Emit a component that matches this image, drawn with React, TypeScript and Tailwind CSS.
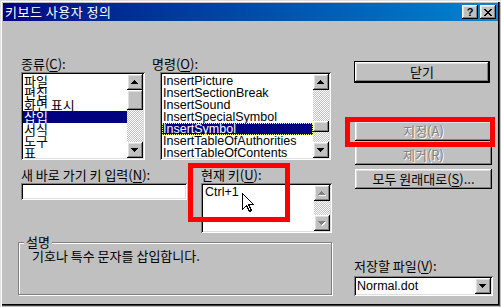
import React from 'react';

const raised = 'shadow-[inset_-1px_-1px_#000,inset_1px_1px_#fff,inset_-2px_-2px_#808080,inset_2px_2px_#dfdfdf]';
const sunken = 'shadow-[inset_1px_1px_#808080,inset_-1px_-1px_#fff,inset_2px_2px_#000,inset_-2px_-2px_#dfdfdf]';
const dither = 'bg-[repeating-conic-gradient(#fff_0_25%,#c0c0c0_0_50%)] bg-[length:2px_2px]';
const kr = "font-['Noto_Sans_CJK_KR',sans-serif]";
const en = "font-['Liberation_Sans','Noto_Sans_CJK_KR',sans-serif]";

function Tri({ down, disabled }: { down?: boolean; disabled?: boolean }) {
  const rows = down ? [0, 1, 2, 3] : [3, 2, 1, 0];
  const fill = disabled ? '#808080' : '#000';
  return (
    <svg width="8" height="5" viewBox="0 0 8 5" shapeRendering="crispEdges">
      {rows.map((r, i) => (
        <g key={i}>
          {disabled && <rect x={r + 1} y={i + 1} width={7 - r * 2} height="1" fill="#fff" />}
          <rect x={r} y={i} width={7 - r * 2} height="1" fill={fill} />
        </g>
      ))}
    </svg>
  );
}

function ArrowBtn({ down, disabled }: { down?: boolean; disabled?: boolean }) {
  return (
    <div className={`w-[16px] h-[16px] shrink-0 bg-[#c0c0c0] flex items-center justify-center ${raised}`}>
      <Tri down={down} disabled={disabled} />
    </div>
  );
}

function ScrollBar({ before, thumb, disabled }: { before: number; thumb: number; disabled?: boolean }) {
  return (
    <div className="w-[16px] flex flex-col">
      <ArrowBtn disabled={disabled} />
      <div className={`flex-1 flex flex-col ${dither}`}>
        <div style={{ height: before }} />
        {thumb > 0 && <div className={`bg-[#c0c0c0] ${raised}`} style={{ height: thumb }} />}
      </div>
      <ArrowBtn down disabled={disabled} />
    </div>
  );
}

function Label({ text, k, rest = '):' }: { text: string; k: string; rest?: string }) {
  return (
    <div className={`h-[16px] leading-[16px] text-[13px] text-black whitespace-nowrap ${kr}`}>
      {text}(<span className="underline underline-offset-2">{k}</span>{rest}
    </div>
  );
}

function Button({ children, disabled, className = '' }: { children: React.ReactNode; disabled?: boolean; className?: string }) {
  return (
    <div
      className={`h-[20px] bg-[#c0c0c0] flex items-center justify-center text-[13px] ${kr} ${raised} ${
        disabled ? 'text-[#808080] [text-shadow:1px_1px_0_#fff]' : 'text-black'
      } ${className}`}
    >
      {children}
    </div>
  );
}

const categories = ['파일', '편집', '화면 표시', '삽입', '서식', '도구', '표'];
const commands = [
  'InsertPicture',
  'InsertSectionBreak',
  'InsertSound',
  'InsertSpecialSymbol',
  'InsertSymbol',
  'InsertTableOfAuthorities',
  'InsertTableOfContents',
];

export default function App() {
  return (
    <div className={`relative w-[501px] h-[307px] bg-[#c0c0c0] flex flex-col overflow-hidden select-none shadow-[inset_1px_1px_#dfdfdf,inset_2px_2px_#fff,inset_-1px_-1px_#c0c0c0,inset_-2px_-2px_#404040,inset_-3px_-3px_#000]`}>
      {/* 제목 표시줄 */}
      <div className="mx-[3px] mt-[3px] h-[18px] bg-gradient-to-r from-[#000080] to-[#1084d0] flex items-center pl-[2px] pr-[2px]">
        <span className={`text-white text-[13px] leading-[18px] tracking-[0.5px] ${kr}`}>키보드 사용자 정의</span>
        <div className="ml-auto flex gap-[2px]">
          <div className={`w-[16px] h-[14px] bg-[#c0c0c0] flex items-center justify-center text-[11px] font-bold leading-none text-black ${en} ${raised}`}>
            ?
          </div>
          <div className={`w-[16px] h-[14px] bg-[#c0c0c0] flex items-center justify-center ${raised}`}>
            <svg width="8" height="7" viewBox="0 0 8 7" shapeRendering="crispEdges">
              <path d="M0 0h2v1h-2zM6 0h2v1h-2zM1 1h2v1h-2zM5 1h2v1h-2zM2 2h4v1h-4zM3 3h2v1h-2zM2 4h4v1h-4zM1 5h2v1h-2zM5 5h2v1h-2zM0 6h2v1h-2zM6 6h2v1h-2z" fill="#000" />
            </svg>
          </div>
        </div>
      </div>

      <div className="flex">
        {/* 왼쪽 영역 */}
        <div className="ml-[18px] w-[314px] flex flex-col">
          <div className="mt-[35px] ml-[3px] flex">
            <div className="w-[124px] flex flex-col">
              <Label text="종류" k="C" />
              <div className={`h-[88px] bg-white p-[2px] flex ${sunken}`}>
                <div className={`flex-1 pt-[1px] text-[13px] ${kr}`}>
                  {categories.map((c, i) => (
                    <div
                      key={c}
                      className={`h-[12px] leading-[12px] pl-[1px] whitespace-nowrap ${
                        i === 3 ? 'bg-[#000080] text-white' : 'text-black'
                      }`}
                    >
                      {c}
                    </div>
                  ))}
                </div>
                <ScrollBar before={0} thumb={20} />
              </div>
            </div>
            <div className="ml-[7px] w-[180px] flex flex-col">
              <Label text="명령" k="O" />
              <div className={`ml-[8px] w-[171px] h-[88px] bg-white p-[2px] flex ${sunken}`}>
                <div className={`flex-1 pt-[1px] text-[12.5px] ${en}`}>
                  {commands.map((c, i) => (
                    <div
                      key={c}
                      className={`h-[12px] leading-[12px] pl-[1px] whitespace-nowrap ${
                        i === 4
                          ? 'bg-[#000080] text-white outline-1 outline-dotted outline-[#ffff80] -outline-offset-1'
                          : 'text-black'
                      }`}
                    >
                      {c}
                    </div>
                  ))}
                </div>
                <ScrollBar before={31} thumb={11} />
              </div>
            </div>
          </div>

          <div className="mt-[7px] ml-[3px] flex">
            <div className="w-[166px] flex flex-col">
              <Label text="새 바로 가기 키 입력" k="N" />
              <div className={`h-[17px] bg-white ${sunken}`} />
            </div>
            <div className="ml-[14px] w-[131px] flex flex-col">
              <Label text="현재 키" k="U" />
              <div className={`h-[50px] bg-white p-[2px] flex ${sunken}`}>
                <div className={`flex-1 pt-[1px] pl-[2px] text-[12.5px] leading-[12px] text-black ${en}`}>Ctrl+1</div>
                <ScrollBar before={0} thumb={0} disabled />
              </div>
            </div>
          </div>

          {/* 설명 */}
          <div className="mt-[9px] h-[53px] border border-[#808080] shadow-[inset_1px_1px_#fff,1px_1px_#fff] px-[13px] flex flex-col">
            <div className={`-mt-[8px] -ml-[8px] w-fit px-[2px] bg-[#c0c0c0] text-[13px] leading-[14px] text-black ${kr}`}>설명</div>
            <div className={`text-[13px] leading-[14px] text-black ${kr}`}>기호나 특수 문자를 삽입합니다.</div>
          </div>
        </div>

        {/* 오른쪽 버튼 */}
        <div className="ml-[22px] w-[139px] flex flex-col">
          <div className="mt-[41px] ml-[1px] w-[134px] outline-1 outline-black">
            <Button>닫기</Button>
          </div>
          <Button disabled className="mt-[39px] ml-[1px] w-[137px]">지정(A)</Button>
          <Button disabled className="mt-[4px] ml-[1px] w-[137px]">제거(R)</Button>
          <Button className="mt-[4px] ml-[1px] w-[137px]">
            모두 원래대로(<span className="underline underline-offset-2">S</span>)...
          </Button>
          <div className="mt-[66px] h-[21px] flex items-center">
            <Label text="저장할 파일" k="V" />
          </div>
          <div className={`h-[20px] bg-white p-[2px] flex items-center ${sunken}`}>
            <span className={`flex-1 pl-[1px] text-[12.5px] text-black ${en}`}>Normal.dot</span>
            <ArrowBtn down />
          </div>
        </div>
      </div>

      {/* 강조 표시 */}
      <div className="absolute left-[345px] top-[117px] w-[150px] h-[30px] border-[5px] border-[#ff0000]" />
      <div className="absolute left-[188px] top-[163px] w-[102px] h-[59px] border-[5px] border-[#ff0000]" />

      {/* 마우스 포인터 */}
      <svg className="absolute left-[242px] top-[193px]" width="12" height="20" viewBox="0 0 12 20" shapeRendering="crispEdges">
        <path d="M0.5 0.5V16.5L4.5 12.5L7.5 18.5L9.5 17.5L6.5 11.5H11.5Z" fill="#fff" stroke="#000" strokeWidth="1" />
      </svg>
    </div>
  );
}
